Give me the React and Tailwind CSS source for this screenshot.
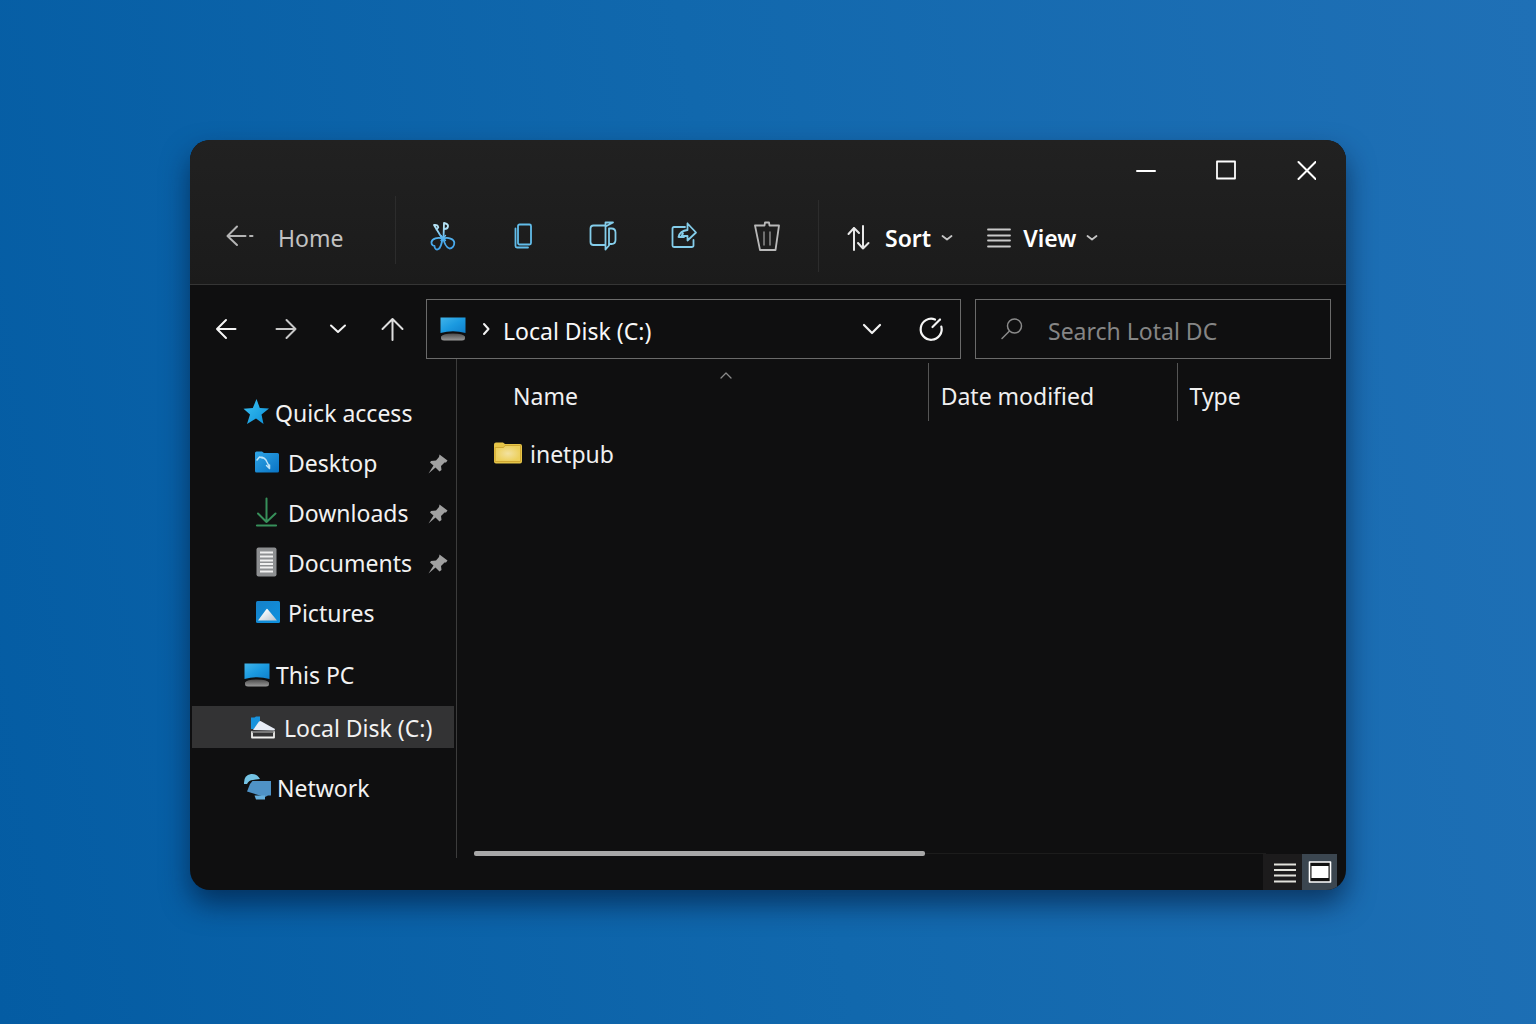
import React from "react";

function Svg({ w, h, children, className = "" }) {
  return (
    <svg
      width={w}
      height={h}
      viewBox={`0 0 ${w} ${h}`}
      fill="none"
      strokeLinecap="round"
      strokeLinejoin="round"
      className={`shrink-0 ${className}`}
      aria-hidden="true"
    >
      {children}
    </svg>
  );
}

/* ---------- toolbar icons ---------- */

const HomeArrow = () => (
  <Svg w={28} h={24}>
    <path d="M11 2.500 L1.500 12 L11 21 M1.500 12 H19.500 M24 12 H26.500" stroke="#b4b4b4" strokeWidth="2" />
  </Svg>
);

const Cut = () => (
  <Svg w={26} h={30}>
    <defs>
      <linearGradient id="cut" x1="0" y1="0" x2="0" y2="30" gradientUnits="userSpaceOnUse">
        <stop offset="0.2" stopColor="#b5e2f5" />
        <stop offset="0.6" stopColor="#4fb0ee" />
        <stop offset="1" stopColor="#3f9fe8" />
      </linearGradient>
    </defs>
    <g stroke="url(#cut)" strokeWidth="1.800">
      <path d="M12.500 18 L4 4 Q8 3.500 8.300 6.500 L6.500 8.500" />
      <path d="M13.500 18 L14 2 Q18.500 3 18 5.500 Q17.500 8 14.500 8" />
      <path d="M12.500 17.500 C8 16 2 17.500 1.500 21 C1.300 24 3.500 25 4.500 25 C4.500 28 6.500 29.300 8.500 28 C11 26.500 12 21 12.500 17.500 Z" />
      <path d="M13.500 17.500 C18 16 24 18 24.300 21.500 C24.500 25 22 27.500 19.500 27.500 C16 26.500 14 21 13.500 17.500 Z" />
      <path d="M11 14.500 L15.500 19.500 M15.500 14.500 L11 19.500" strokeWidth="1.400" />
    </g>
  </Svg>
);

const Copy = () => (
  <Svg w={20} h={26}>
    <g stroke="#62bdea" strokeWidth="1.800">
      <rect x="4" y="1.500" width="13" height="20" rx="1.500" />
      <path d="M1.500 5.500 V23 Q1.500 24.500 3 24.500 H14" />
    </g>
  </Svg>
);

const Rename = () => (
  <Svg w={32} h={30}>
    <g stroke="#84cdea" strokeWidth="1.800">
      <path d="M16 4.500 H4.500 Q1.500 4.500 1.500 7.500 V21 Q1.500 24 4.500 24 H16" />
      <path d="M16.500 28.500 V1.500 H24 L16.500 5.500 M16.500 28.500 L20 24.500 V7.500 M20 7.500 H22.500 Q26.500 7.500 26.500 11.500 V19 Q26.500 23 22.500 23 H20" />
    </g>
  </Svg>
);

const Share = () => (
  <Svg w={30} h={28}>
    <g stroke="#84cdea" strokeWidth="1.800">
      <path d="M14 5 H3 Q1.500 5 1.500 6.500 V23.500 Q1.500 25 3 25 H20.500 Q22.500 25 22.500 23.500 V18" />
      <path d="M16.500 1.500 L25 10.500 L16.500 18.500 V14 H10.500 L12 11.500 M16.500 1.500 V8 C11 8.500 8.500 11 7.500 15 H13" />
    </g>
  </Svg>
);

const Trash = () => (
  <Svg w={28} h={32}>
    <g stroke="#b9b9b9" strokeWidth="1.800">
      <path d="M2 5.500 H11.500 L12 2.500 H16 L16.500 5.500 H26 L22.500 30 H7 Z" />
      <path d="M11 12 V25 M17 12 V25" strokeWidth="1.500" stroke="#8b8b8b" />
    </g>
  </Svg>
);

const SortIcon = () => (
  <Svg w={24} h={28}>
    <g stroke="#e8e8e8" strokeWidth="2">
      <path d="M7 26 V4 M1.500 10 L7 4 L12 9" />
      <path d="M16 2 V24.500 M11 19 L16 24.500 L21.500 19" />
    </g>
  </Svg>
);

const ViewIcon = () => (
  <Svg w={24} h={20}>
    <path d="M1 1.500 H23 M1 7.500 H23 M1 12.500 H23 M1 18.500 H23" stroke="#c9c9c9" strokeWidth="1.800" />
  </Svg>
);

const SmallChevron = () => (
  <Svg w={12} h={8}>
    <path d="M1.500 2 L6 5.500 L10.500 2" stroke="#c4c4c4" strokeWidth="1.800" />
  </Svg>
);

/* ---------- navigation icons ---------- */

const Arrow = ({ d, color }) => (
  <Svg w={24} h={24}>
    <path d={d} stroke={color} strokeWidth="2" />
  </Svg>
);

const Chevron = () => (
  <Svg w={20} h={12}>
    <path d="M2 2 L10 10 L18 2" stroke="#f2f2f2" strokeWidth="2.200" />
  </Svg>
);

const RecentChevron = () => (
  <Svg w={18} h={12}>
    <path d="M2 2.500 L9 9 L16 2.500" stroke="#f2f2f2" strokeWidth="2" />
  </Svg>
);

const Crumb = () => (
  <Svg w={8} h={14}>
    <path d="M2 2 L6.500 7 L2 12" stroke="#f2f2f2" strokeWidth="2" />
  </Svg>
);

const Refresh = () => (
  <Svg w={26} h={26}>
    <g stroke="#f5f5f5" strokeWidth="2.200">
      <path d="M17 3.500 A10.500 10.500 0 1 0 23.300 10.500" />
      <path d="M14.500 11 L22 3.500" />
    </g>
  </Svg>
);

const SearchIcon = () => (
  <Svg w={24} h={24}>
    <g stroke="#8a8a8a" strokeWidth="1.500">
      <circle cx="14.500" cy="9" r="7" />
      <path d="M9.500 14 L2 21.500" />
    </g>
  </Svg>
);

const Monitor = ({ id }) => (
  <Svg w={26} h={24}>
    <defs>
      <linearGradient id={`${id}-s`} x1="0" y1="0" x2="1" y2="1">
        <stop offset="0" stopColor="#41b4ea" />
        <stop offset="0.5" stopColor="#1b9ae0" />
        <stop offset="1" stopColor="#0f7fcb" />
      </linearGradient>
      <linearGradient id={`${id}-b`} x1="0" y1="0" x2="0" y2="1">
        <stop offset="0" stopColor="#4c4c4c" />
        <stop offset="1" stopColor="#9a9a9a" />
      </linearGradient>
    </defs>
    <path d="M0.500 0.500 H25.500 V16 Q13 12.500 0.500 16 Z" fill={`url(#${id}-s)`} />
    <path d="M1 19.500 Q3 16.500 13 16.500 Q23 16.500 25 19.500 V21 Q25 23.500 22 23.500 H4 Q1 23.500 1 21 Z" fill={`url(#${id}-b)`} />
  </Svg>
);

/* ---------- sidebar icons ---------- */

const Star = () => (
  <Svg w={26} h={26}>
    <defs>
      <linearGradient id="star" x1="0" y1="0" x2="1" y2="1">
        <stop offset="0" stopColor="#3cc3f4" />
        <stop offset="1" stopColor="#0c8fd8" />
      </linearGradient>
    </defs>
    <path d="M13.500 0 L16.800 9 L26 9.500 L18.500 15.500 L20.500 25 L13 19.500 L4 25 L7 15.500 L0.500 9.800 L9.800 9 Z" fill="url(#star)" />
  </Svg>
);

const DesktopIcon = () => (
  <Svg w={26} h={22}>
    <defs>
      <linearGradient id="desk" x1="0" y1="0" x2="1" y2="1">
        <stop offset="0" stopColor="#30a5e6" />
        <stop offset="1" stopColor="#0873c4" />
      </linearGradient>
    </defs>
    <path d="M1 2 Q1 0.500 2.500 0.500 H8 L10 2 H23.500 Q25 2 25 3.500 V20 Q25 21.500 23.500 21.500 H2.500 Q1 21.500 1 20 Z" fill="url(#desk)" />
    <path d="M3 9 L5.500 6 L8.500 7 M5.500 6 Q11 6 13 11 L15.500 16 M12.500 14.500 L15.500 17.500 L15.500 14" stroke="#bfe4f8" strokeWidth="1.500" />
  </Svg>
);

const DownloadIcon = () => (
  <Svg w={26} h={30}>
    <path d="M12.500 1.500 V25 M4 16.500 L12.500 25 L21.500 16.500" stroke="#37905a" strokeWidth="2" />
    <path d="M3 28.500 H22" stroke="#37905a" strokeWidth="2.200" />
  </Svg>
);

const DocumentIcon = () => (
  <Svg w={26} h={30}>
    <rect x="2.500" y="0.500" width="20" height="29" rx="2" fill="#8d8f91" />
    <path d="M6 5.500 H19 M6 9.500 H19 M6 13.500 H19 M6 17 H19 M6 20.500 H19 M6 24.500 H19" stroke="#f0f0f0" strokeWidth="1.800" strokeLinecap="butt" />
  </Svg>
);

const PictureIcon = () => (
  <Svg w={26} h={24}>
    <defs>
      <linearGradient id="pic" x1="0" y1="0" x2="1" y2="1">
        <stop offset="0" stopColor="#1680c8" />
        <stop offset="1" stopColor="#0e92e0" />
      </linearGradient>
      <linearGradient id="mount" x1="0" y1="0" x2="1" y2="1">
        <stop offset="0.3" stopColor="#f4f7fa" />
        <stop offset="1" stopColor="#b9c3cc" />
      </linearGradient>
    </defs>
    <rect x="2" y="1" width="24" height="22" rx="1.500" fill="url(#pic)" />
    <path d="M4 20.500 L12.500 9 Q13 8.500 13.500 9 L23 20.500 Z" fill="url(#mount)" />
  </Svg>
);

const DiskIcon = () => (
  <Svg w={26} h={24}>
    <path d="M1 2.500 H4.500 L6 1.500 H10 V6 L4 14 H1 Z" fill="#1892dc" />
    <path d="M3 15 L9 6.500 Q10 5.800 11 6.200 L25 14 L24.500 15.500 Z" fill="#e9edf6" />
    <path d="M2 17 V22.500 H24 V17" stroke="#f0f0ee" strokeWidth="1.800" />
    <path d="M2.500 17 H23.500" stroke="#8f8f8d" strokeWidth="1.600" />
  </Svg>
);

const NetworkIcon = () => (
  <Svg w={28} h={28}>
    <path d="M1 11 Q0.500 2 8 1 Q14 0.500 17 6 L10 7 Q6 7 4 11 Z" fill="#74c3e4" />
    <path d="M9.500 8 H28 V22.500 H25 L22 24 L4 18.500 L7 11 Z" fill="#4f92c6" />
    <path d="M11.500 22.500 H22 V26.500 H13 Z" fill="#66afdd" />
  </Svg>
);

const Pin = () => (
  <Svg w={20} h={20}>
    <path d="M11.500 0.500 L19.500 6.500 L18 8.500 L16.500 8.500 L13 12 L13.500 16 L11.500 17.500 L7.500 13.500 L0.500 19.500 L5.500 11.500 L2 8.500 L3 7 L8 6.500 L11 3 Z" fill="#a0a0a0" />
  </Svg>
);

const FolderIcon = () => (
  <Svg w={30} h={22}>
    <defs>
      <radialGradient id="fold">
        <stop offset="0" stopColor="#f3e2a0" />
        <stop offset="1" stopColor="#edd05c" />
      </radialGradient>
    </defs>
    <path d="M1 2.500 Q1 0.500 3 0.500 H10 L12 2 H27 Q29 2 29 4 V19.500 Q29 21.500 27 21.500 H3 Q1 21.500 1 19.500 Z" fill="#e6c548" />
    <path d="M2.500 5.500 H10.500 L12 3.500 H27.500 V19.500 H2.500 Z" fill="url(#fold)" stroke="#c9a02c" strokeWidth="0.800" />
  </Svg>
);

/* ---------- sections ---------- */

function TitleBar() {
  return (
    <div className="flex h-15 justify-end">
      <button aria-label="Minimize" className="grid w-20 place-items-center">
        <Svg w={20} h={20}><path d="M1 11 H19" stroke="#fff" strokeWidth="2" /></Svg>
      </button>
      <button aria-label="Maximize" className="grid w-20 place-items-center">
        <Svg w={20} h={20}><rect x="1" y="1.500" width="18" height="17" stroke="#fff" strokeWidth="1.800" /></Svg>
      </button>
      <button aria-label="Close" className="grid w-20 place-items-center">
        <Svg w={20} h={20}><path d="M2.500 2 L19.500 19 M19.500 2 L2.500 19" stroke="#fff" strokeWidth="2" /></Svg>
      </button>
    </div>
  );
}

const actions = [
  { label: "Cut", icon: <Cut /> },
  { label: "Copy", icon: <Copy /> },
  { label: "Rename", icon: <Rename /> },
  { label: "Share", icon: <Share /> },
  { label: "Delete", icon: <Trash /> },
];

function Toolbar() {
  return (
    <div className="flex h-21 items-center pb-3">
      <button className="flex w-[205px] items-center gap-6 pl-9 text-[#c2c2c2]">
        <HomeArrow />
        <span className="pt-1">Home</span>
      </button>
      <div className="mb-3 h-17 w-px bg-[#2c2c2c]" />
      <div className="flex w-[422px] gap-5 pl-4">
        {actions.map((a) => (
          <button key={a.label} aria-label={a.label} className="grid h-10 w-[61px] place-items-center">
            {a.icon}
          </button>
        ))}
      </div>
      <div className="h-18 w-px bg-[#2c2c2c]" />
      <button className="ml-7 flex items-center pt-1 font-semibold text-white">
        <SortIcon />
        <span className="mr-[10px] ml-[14px]">Sort</span>
        <SmallChevron />
      </button>
      <button className="ml-[34px] flex items-center pt-1 font-semibold text-white">
        <ViewIcon />
        <span className="mr-[10px] ml-3">View</span>
        <SmallChevron />
      </button>
    </div>
  );
}

function AddressBar() {
  return (
    <div className="flex h-[74px] items-end pr-[15px]">
      <nav aria-label="History" className="flex h-15 w-[236px] shrink-0 items-center pl-6">
        <button aria-label="Back" className="w-15"><Arrow color="#f5f5f5" d="M12 3 L3 12 L12 21 M3 12 H21.500" /></button>
        <button aria-label="Forward" className="w-[55px]"><Arrow color="#c8c8c8" d="M12.500 3 L21.500 12 L12.500 21 M2.500 12 H21.500" /></button>
        <button aria-label="Recent locations" className="w-[51px]"><RecentChevron /></button>
        <button aria-label="Up"><Arrow color="#dedede" d="M2.500 12 L12.500 2 L22.500 12 M12.500 2 V23" /></button>
      </nav>
      <div className="flex h-15 flex-[504] items-center border border-[#6a6a6a] pr-4 pl-[13px]">
        <Monitor id="addr" />
        <span className="mr-[13px] ml-4"><Crumb /></span>
        <span className="flex-1 pt-1 text-[#f8f8f8]">Local Disk (C:)</span>
        <button aria-label="Previous locations" className="mr-9"><Chevron /></button>
        <button aria-label="Refresh"><Refresh /></button>
      </div>
      <label className="ml-[14px] flex h-15 flex-[330] items-center gap-6 border border-[#6a6a6a] pl-6">
        <SearchIcon />
        <input
          type="search"
          aria-label="Search"
          placeholder="Search Lotal DC"
          className="w-full min-w-0 bg-transparent pt-1 text-[#eee] outline-none placeholder:text-[#858585]"
        />
      </label>
    </div>
  );
}

const quick = [
  { label: "Desktop", icon: <DesktopIcon />, pinned: true },
  { label: "Downloads", icon: <DownloadIcon />, pinned: true },
  { label: "Documents", icon: <DocumentIcon />, pinned: true },
  { label: "Pictures", icon: <PictureIcon /> },
];

function Sidebar() {
  return (
    <aside className="w-[267px] shrink-0 border-r border-[#3c3c3c] pt-7 text-[#f2f2f2]">
      <a href="#quick" className="flex h-[50px] items-center gap-[6px] pl-[53px]">
        <Star />
        <span className="pt-0.5">Quick access</span>
      </a>
      {quick.map((q) => (
        <a key={q.label} href={`#${q.label}`} className="flex h-[50px] items-center gap-2 pr-2 pl-16">
          {q.icon}
          <span className="flex-1 pt-0.5">{q.label}</span>
          {q.pinned && <span className="pt-1"><Pin /></span>}
        </a>
      ))}
      <a href="#pc" className="mt-[17px] flex h-[42px] items-center gap-[6px] pl-[54px]">
        <Monitor id="pc" />
        <span>This PC</span>
      </a>
      <a href="#c" aria-current="page" className="mx-[2px] mt-[10px] flex h-[42px] items-center gap-2 bg-[#333334] pl-[58px]">
        <DiskIcon />
        <span className="pt-0.5">Local Disk (C:)</span>
      </a>
      <a href="#network" className="mt-[18px] flex h-[42px] items-center gap-[6px] pl-[53px]">
        <NetworkIcon />
        <span className="pt-0.5">Network</span>
      </a>
    </aside>
  );
}

function Files() {
  return (
    <section className="flex min-w-0 flex-1 flex-col pt-1">
      <table className="w-full table-fixed text-left text-[#f0f0f0]">
        <thead>
          <tr className="h-[58px]">
            <th className="relative w-[53%] pt-2 pl-14 font-normal">
              Name
              <Svg w={14} h={8} className="absolute top-2 left-[262px]">
                <path d="M2 7 L7 2 L12 7" stroke="#8a8a8a" strokeWidth="1.300" />
              </Svg>
            </th>
            <th className="w-[28%] border-l border-[#555] pt-2 pl-3 font-normal">Date modified</th>
            <th className="border-l border-[#555] pt-2 pl-3 font-normal">Type</th>
          </tr>
        </thead>
        <tbody>
          <tr className="h-16">
            <td className="pl-9">
              <div className="flex items-center gap-[7px]">
                <FolderIcon />
                <span className="pt-0.5">inetpub</span>
              </div>
            </td>
            <td />
            <td />
          </tr>
        </tbody>
      </table>
      <div className="mt-auto flex items-center pr-20 pb-0.5 pl-[17px]">
        <div className="h-[5px] w-[57%] rounded-xs bg-[#a8a8a8]" />
        <div className="h-px flex-1 bg-[#1c1c1c]" />
      </div>
    </section>
  );
}

export default function App() {
  return (
    <div className="flex min-h-screen bg-linear-80 from-[#045ca3] via-[#1168ad] to-[#1f70b6] px-[190px] pt-[140px] pb-[134px] font-['Noto_Sans','Open_Sans',sans-serif] text-[23px] leading-8">
      <main className="flex min-w-0 flex-1 flex-col overflow-hidden rounded-[20px] bg-[#0f0f10] shadow-[0_14px_28px_rgba(0,20,50,0.6)]">
        <header className="border-b border-[#353535] bg-linear-to-b from-[#212121] to-[#1b1b1b]">
          <TitleBar />
          <Toolbar />
        </header>
        <AddressBar />
        <div className="flex flex-1">
          <Sidebar />
          <Files />
        </div>
        <footer className="flex h-8 justify-end pr-[9px]">
          <button aria-label="Details view" className="-mt-1 grid w-[39px] place-items-center bg-[#1c1b1c] pt-0.5 pl-1">
            <Svg w={22} h={20}>
              <path d="M0 1.500 H22 M0 7 H22 M0 12.500 H22 M0 18.500 H22" stroke="#e2e2dc" strokeWidth="1.800" strokeLinecap="butt" />
            </Svg>
          </button>
          <button aria-label="Large icons view" aria-pressed="true" className="-mt-1 grid w-[35px] place-items-center bg-[#3b4650]">
            <Svg w={24} h={22}>
              <rect x="1.500" y="1" width="21" height="20" fill="#111" stroke="#fff" strokeWidth="1.600" />
              <rect x="3.500" y="5" width="17" height="12" fill="#fff" />
            </Svg>
          </button>
        </footer>
      </main>
    </div>
  );
}
